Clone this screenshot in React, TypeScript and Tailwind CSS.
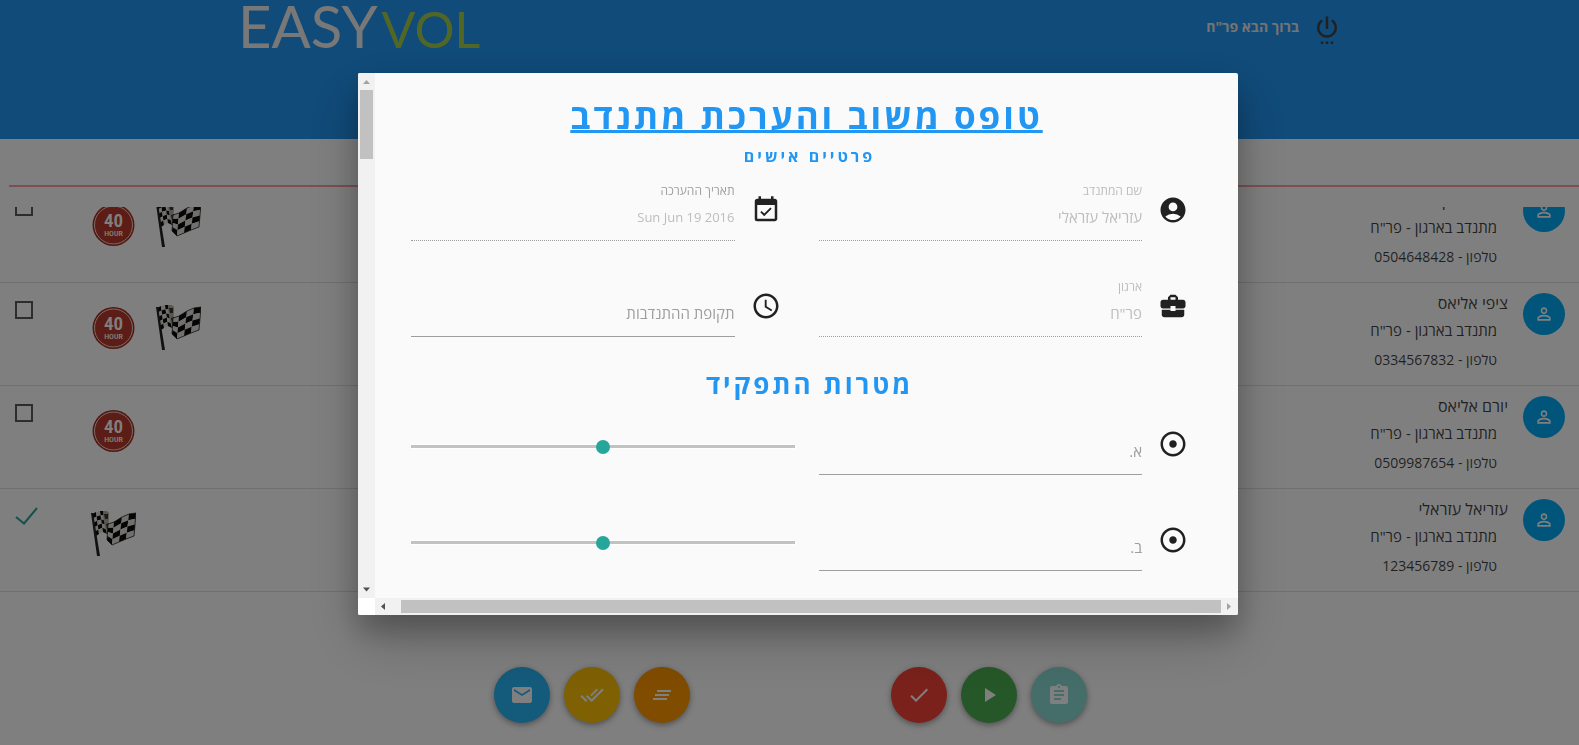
import type { ReactNode } from "react";
import type { IconType } from "react-icons";
import {
  MdAccessTime,
  MdAccountCircle,
  MdAdjust,
  MdAssignment,
  MdBusinessCenter,
  MdClearAll,
  MdDone,
  MdDoneAll,
  MdEmail,
  MdEventAvailable,
  MdPersonOutline,
  MdPlayArrow,
  MdSettingsPower,
} from "react-icons/md";

type Point = [number, number];

function meshCells(top: Point[], bottom: Point[], rows: number) {
  const cells: { d: string; dark: boolean }[] = [];
  const at = (c: number, r: number) => {
    const t = r / rows;
    const x = top[c][0] + (bottom[c][0] - top[c][0]) * t;
    const y = top[c][1] + (bottom[c][1] - top[c][1]) * t;
    return `${x.toFixed(1)} ${y.toFixed(1)}`;
  };
  for (let c = 0; c < top.length - 1; c++) {
    for (let r = 0; r < rows; r++) {
      cells.push({
        d: `M${at(c, r)}L${at(c + 1, r)}L${at(c + 1, r + 1)}L${at(c, r + 1)}Z`,
        dark: (c + r) % 2 === 0,
      });
    }
  }
  return cells;
}

const hoistCells = meshCells(
  [[1, 3], [5, 1], [9, 0], [13, 0]],
  [[5, 25], [8, 23], [12, 21], [16, 23]],
  5,
);
const flyCells = meshCells(
  [[17, 13], [23, 11], [31, 6], [38, 3], [45, 2]],
  [[16, 29], [21, 34], [28, 31], [35, 28], [43, 25]],
  4,
);

function RaceFlag() {
  return (
    <svg viewBox="0 0 45 45" className="size-[45px]" aria-hidden="true">
      {hoistCells.map((cell) => (
        <path key={cell.d} d={cell.d} fill={cell.dark ? "#0a0a0a" : "#e4e0da"} />
      ))}
      <path d="M12 0 Q16 -1 18 2 L17.500 20 L16 23 Q12 11 12 0Z" fill="#b5aca0" />
      <path d="M13 3h4v5h-3zM15 13l3 -1v5l-2 1z" fill="#3a362f" />
      {flyCells.map((cell) => (
        <path key={cell.d} d={cell.d} fill={cell.dark ? "#e4e0da" : "#0a0a0a"} />
      ))}
      <path
        d="M17 13L23 11L31 6L38 3L45 2L43 25L35 28L28 31L21 34L16 29Z"
        fill="none"
        stroke="#222"
        strokeWidth="0.8"
      />
      <path d="M0 2h2L9 45H6Z" fill="#222" />
    </svg>
  );
}

function HourBadge() {
  return (
    <svg viewBox="0 0 45 45" className="size-[45px]" role="img" aria-label="40 HOUR">
      <circle cx="22.500" cy="23" r="21" fill="#a82e22" />
      <circle cx="22.500" cy="23" r="19" fill="#b93a2c" stroke="#f0d8d4" strokeWidth="1" />
      <g
        fill="#ffffff"
        textAnchor="middle"
        fontFamily="'Liberation Sans Narrow', 'Roboto Condensed', Roboto, sans-serif"
      >
        <text x="22.500" y="24.500" fontSize="19" fontWeight="600">
          40
        </text>
        <text x="22.500" y="33.500" fontSize="8" fontWeight="500">
          HOUR
        </text>
      </g>
    </svg>
  );
}

interface Volunteer {
  name: string;
  phone: string;
  hours: boolean;
  flag: boolean;
  done: boolean;
}

const volunteers: Volunteer[] = [
  { name: "ישראל כהן", phone: "0504648428", hours: true, flag: true, done: false },
  { name: "ציפי אליאס", phone: "0334567832", hours: true, flag: true, done: false },
  { name: "יורם אליאס", phone: "0509987654", hours: true, flag: false, done: false },
  { name: "עזריאל עזראלי", phone: "123456789", hours: false, flag: true, done: true },
];

function VolunteerRow({ person }: { person: Volunteer }) {
  return (
    <li className="flex h-[103px] shrink-0 items-start border-b border-[#e0e0e0] pr-[14px] pl-[15px]">
      <span className="mt-[10px] flex size-[42px] shrink-0 items-center justify-center rounded-full bg-[#03a9f4] text-white">
        <MdPersonOutline size={20} />
      </span>
      <div className="mt-[7px] mr-[15px] flex-1 text-black/75">
        <p className="text-[16px] leading-[26px]">{person.name}</p>
        <p className="pr-[11px] text-[15px] leading-[28px]">{'מתנדב בארגון - פר"ח'}</p>
        <p className="pr-[11px] text-[14px] leading-[32px]">טלפון - {person.phone}</p>
      </div>
      <div className="mt-[22px] flex flex-row-reverse gap-5">
        {person.hours && <HourBadge />}
        {person.flag && <RaceFlag />}
      </div>
      <label className="mt-[18px] mr-[52px] grid w-6 justify-items-end">
        <input
          type="checkbox"
          defaultChecked={person.done}
          aria-label={person.name}
          className="peer col-start-1 row-start-1 size-[18px] appearance-none border-2 border-[#5a5a5a] checked:border-transparent"
        />
        <svg
          viewBox="0 0 24 18"
          className="pointer-events-none invisible col-start-1 row-start-1 h-[18px] w-6 peer-checked:visible"
          aria-hidden="true"
        >
          <path d="M1 10L9 16.500L22 1" fill="none" stroke="#26a69a" strokeWidth="2" />
        </svg>
      </label>
    </li>
  );
}

function Fab({ icon: Icon, label, className }: { icon: IconType; label: string; className: string }) {
  return (
    <button
      type="button"
      aria-label={label}
      className={`flex size-14 items-center justify-center rounded-full text-white shadow-[0_2px_5px_0_rgba(0,0,0,0.26),0_2px_10px_0_rgba(0,0,0,0.16)] ${className}`}
    >
      <Icon size={24} />
    </button>
  );
}

interface FieldProps {
  id: string;
  icon: IconType;
  label: string;
  value?: string;
  labelClass?: string;
  inputClass?: string;
}

function Field({
  id,
  icon: Icon,
  label,
  value,
  labelClass = "text-[#9e9e9e]",
  inputClass = "text-[15px]",
}: FieldProps) {
  const filled = value !== undefined;
  return (
    <div className="flex h-[63px] items-center gap-4 pr-[14px]">
      <Icon size={30} className="shrink-0 text-[#212121]" />
      <div className="flex min-w-0 flex-1 flex-col">
        <label htmlFor={id} className={`h-[23px] text-[12px] leading-[25px] ${labelClass}`}>
          {filled ? label : ""}
        </label>
        <input
          id={id}
          type="text"
          defaultValue={value}
          disabled={filled}
          aria-label={label}
          placeholder={filled ? undefined : label}
          className={`h-10 w-full border-b border-[#9e9e9e] pb-[7px] text-right placeholder:text-[#9e9e9e] placeholder:opacity-100 focus:outline-none disabled:border-dotted disabled:text-[#bdbdbd] ${inputClass}`}
        />
      </div>
    </div>
  );
}

function ScoreSlider({ label }: { label: string }) {
  return (
    <div className="flex h-[63px] items-center pt-[6px]">
      <input
        type="range"
        aria-label={label}
        min={0}
        max={100}
        defaultValue={50}
        className="h-[5px] w-full appearance-none border-y border-white bg-[#c2c2c2] [&::-webkit-slider-thumb]:size-[14px] [&::-webkit-slider-thumb]:appearance-none [&::-webkit-slider-thumb]:rounded-full [&::-webkit-slider-thumb]:bg-[#26a69a]"
      />
    </div>
  );
}

function FieldGrid({ children }: { children: ReactNode }) {
  return <div className="grid grid-cols-2 gap-x-6 gap-y-[33px]">{children}</div>;
}

function FeedbackDialog() {
  return (
    <section
      role="dialog"
      aria-modal="true"
      aria-labelledby="form-title"
      className="flex w-[880px] max-w-full flex-col self-start overflow-hidden rounded-[2px] bg-[#fafafa] shadow-[0_16px_28px_0_rgba(0,0,0,0.22),0_25px_55px_0_rgba(0,0,0,0.21)]"
    >
      <div className="flex">
        <form className="min-w-0 flex-1 px-9 pt-[18px] pb-[27px]">
          <h1
            id="form-title"
            className="text-center text-[35px] leading-[50px] font-bold tracking-[3px] text-[#2196f3] underline decoration-[3px] underline-offset-1"
          >
            טופס משוב והערכת מתנדב
          </h1>
          <h2 className="mb-[10px] pt-[3px] pl-[6px] text-center text-[16px] leading-[24px] font-bold tracking-[3px] text-[#2196f3]">
            פרטיים אישים
          </h2>
          <FieldGrid>
            <Field id="name" icon={MdAccountCircle} label="שם המתנדב" value="עזריאל עזראלי" labelClass="text-[#bdbdbd]" />
            <Field
              id="date"
              icon={MdEventAvailable}
              label="תאריך ההערכה"
              value="Sun Jun 19 2016"
              inputClass="text-[13px]"
            />
            <Field id="org" icon={MdBusinessCenter} label="ארגון" value={'פר"ח'} labelClass="text-[#bdbdbd]" />
            <Field id="period" icon={MdAccessTime} label="תקופת ההתנדבות" />
          </FieldGrid>
          <h2 className="pt-[29px] pb-[10px] pl-[6px] text-center text-[26px] leading-[36px] font-bold tracking-[3px] text-[#2196f3]">
            מטרות התפקיד
          </h2>
          <FieldGrid>
            <Field id="goal-a" icon={MdAdjust} label="א." />
            <ScoreSlider label="א" />
            <Field id="goal-b" icon={MdAdjust} label="ב." />
            <ScoreSlider label="ב" />
          </FieldGrid>
        </form>
        <div className="flex w-[17px] flex-col items-center bg-[#f1f1f1]" aria-hidden="true">
          <svg viewBox="0 0 17 17" className="size-[17px]">
            <path d="M5 11L8.500 7L12 11Z" fill="#a3a3a3" />
          </svg>
          <div className="h-[69px] w-[13px] bg-[#c1c1c1]" />
          <svg viewBox="0 0 17 17" className="mt-auto size-[17px]">
            <path d="M5 6.500L8.500 10.500L12 6.500Z" fill="#505050" />
          </svg>
        </div>
      </div>
      <div className="flex h-[17px]" aria-hidden="true">
        <div className="flex flex-1 items-center bg-[#f1f1f1]">
          <svg viewBox="0 0 17 17" className="size-[17px]">
            <path d="M6 5L10 8.500L6 12Z" fill="#a3a3a3" />
          </svg>
          <div className="h-[13px] flex-1 bg-[#c1c1c1]" />
          <svg viewBox="0 0 17 17" className="mr-[9px] size-[17px]">
            <path d="M10 5L6 8.500L10 12Z" fill="#505050" />
          </svg>
        </div>
        <div className="w-[17px] bg-white" />
      </div>
    </section>
  );
}

export default function App() {
  return (
    <div dir="rtl" className="min-h-screen bg-white font-['Open_Sans','Noto_Sans',sans-serif]">
      <header className="flex h-[139px] items-start justify-between bg-[#2196f3] pr-[237px] pl-[238px]">
        <div className="flex items-center gap-[13px] pt-[14px]">
          <button type="button" aria-label="יציאה" className="text-[#424242]">
            <MdSettingsPower size={30} />
          </button>
          <span className="pb-1 text-[14px] leading-[20px] font-bold text-[#e8e8e8]">{'ברוך הבא פר"ח'}</span>
        </div>
        <a
          href="#home"
          dir="ltr"
          className="flex items-baseline gap-1 font-['Lato',sans-serif] text-[58px] leading-[52px] text-[#f0f0f0]"
        >
          EASY<span className="text-[50px] text-[#a5cf4c]">VOL</span>
        </a>
      </header>
      <main>
        <div className="mt-[46px] ml-[9px] h-[2px] bg-[#f5a0a5]" />
        <ul className="mt-[20px] flex h-[385px] flex-col justify-end overflow-hidden">
          {volunteers.map((person) => (
            <VolunteerRow key={person.phone} person={person} />
          ))}
        </ul>
        <nav className="mt-[75px] flex justify-center gap-[201px] pl-[2px]">
          <div className="flex gap-[14px]">
            <Fab icon={MdAssignment} label="טופס משוב" className="bg-[#8adbd4]" />
            <Fab icon={MdPlayArrow} label="התחלה" className="bg-[#4caf50]" />
            <Fab icon={MdDone} label="אישור" className="bg-[#f44336]" />
          </div>
          <div className="flex gap-[14px]">
            <Fab icon={MdClearAll} label="ניקוי" className="bg-[#ff9800]" />
            <Fab icon={MdDoneAll} label="בחירת הכל" className="bg-[#ffc107]" />
            <Fab icon={MdEmail} label="שליחת דואר" className="bg-[#29b6f6]" />
          </div>
        </nav>
      </main>
      <div className="fixed inset-0 flex justify-center overflow-hidden bg-black/50 pt-[73px] pl-[17px]">
        <FeedbackDialog />
      </div>
    </div>
  );
}
